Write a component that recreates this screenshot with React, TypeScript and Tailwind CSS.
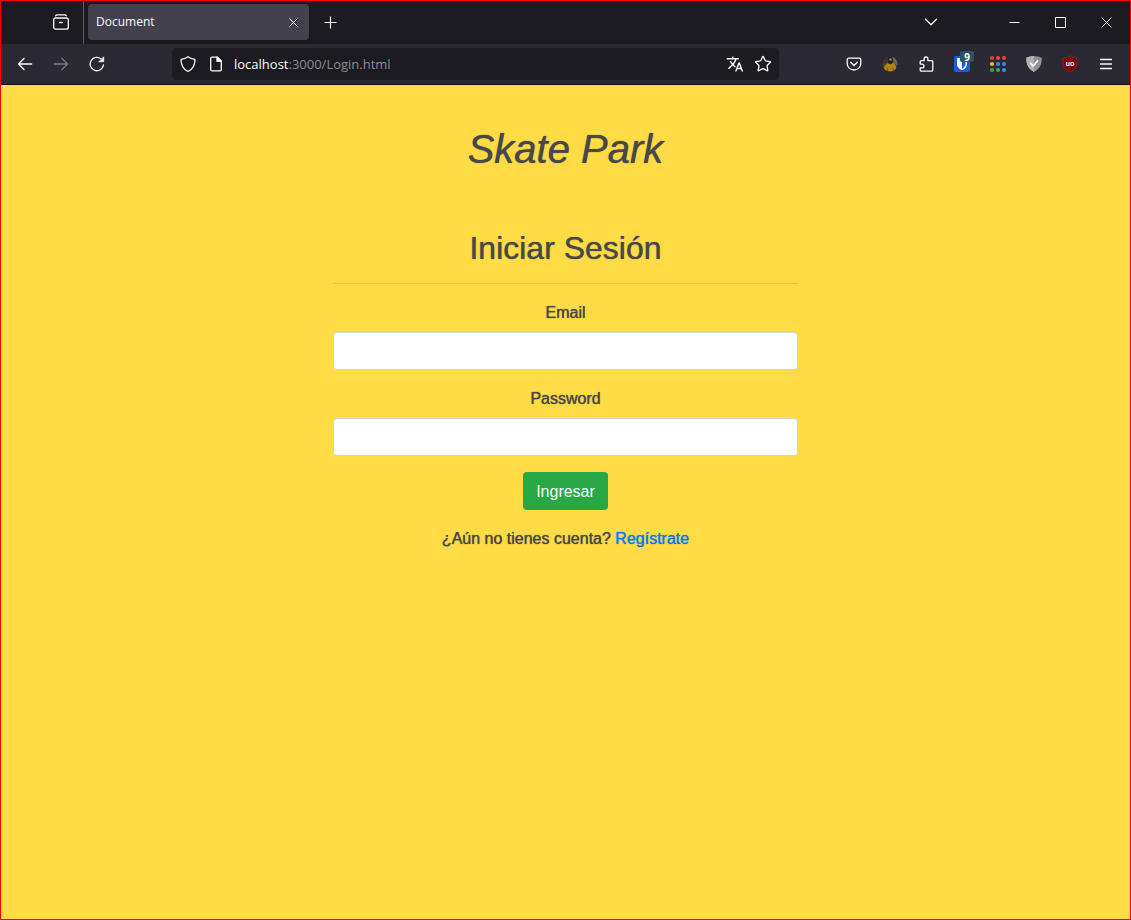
import type { ReactNode } from 'react';
import { Star } from 'lucide-react';
import { MdTranslate } from 'react-icons/md';

function Glyph({ children, label }: { children: ReactNode; label?: string }) {
  return (
    <svg
      width="16"
      height="16"
      viewBox="0 0 16 16"
      fill="none"
      stroke="currentColor"
      strokeWidth="1.3"
      strokeLinecap="round"
      strokeLinejoin="round"
      aria-label={label}
      aria-hidden={label ? undefined : true}
      className="block shrink-0 overflow-visible"
    >
      {children}
    </svg>
  );
}

function BarButton({ label, children, className = '' }: { label: string; children: ReactNode; className?: string }) {
  return (
    <button type="button" aria-label={label} className={`relative flex h-8 w-9 shrink-0 items-center justify-center ${className}`}>
      {children}
    </button>
  );
}

function WindowButton({ label, children }: { label: string; children: ReactNode }) {
  return (
    <button type="button" aria-label={label} className="flex h-full w-[46px] shrink-0 items-center justify-center">
      <svg width="11" height="11" viewBox="0 0 11 11" fill="none" stroke="currentColor" className="block" aria-hidden>
        {children}
      </svg>
    </button>
  );
}

function TabStrip() {
  return (
    <div className="flex h-[43px] bg-[#1c1b22]">
      <div className="flex h-[42px] w-[82px] shrink-0 items-center justify-end pr-0.5">
        <button type="button" aria-label="Vista de Firefox" className="flex size-10 items-center justify-center">
          <Glyph>
            <path d="M2.7 1.8Q3.2.8 4.2.8h7.6q1 0 1.5 1" />
            <rect x=".7" y="4" width="14.6" height="11.2" rx="2" />
            <path d="M6.6 8.500h2.8" />
          </Glyph>
        </button>
      </div>
      <div className="h-full w-px shrink-0 bg-[#5c5b61]" />
      <div className="mt-[3px] ml-1 flex h-9 w-[221px] shrink-0 items-center justify-between rounded bg-[#42414d] pl-2 shadow">
        <span className="font-['Open_Sans','Noto_Sans',sans-serif] text-xs">Document</span>
        <button type="button" aria-label="Cerrar pestaña" className="flex size-8 items-center justify-center">
          <svg width="9" height="9" viewBox="0 0 9 9" stroke="currentColor" strokeWidth="1" aria-hidden>
            <path d="M.5.5l8 8M8.500.5l-8 8" />
          </svg>
        </button>
      </div>
      <button type="button" aria-label="Nueva pestaña" className="ml-[3px] flex h-full w-9 items-center justify-center">
        <svg width="13" height="13" viewBox="0 0 13 13" stroke="currentColor" strokeWidth="1.2" aria-hidden>
          <path d="M6.500.5v12M.5 6.500h12" />
        </svg>
      </button>
      <div className="mr-px ml-auto flex h-[42px] items-center">
        <button type="button" aria-label="Listar pestañas" className="mr-[42px] flex size-9 items-center justify-center">
          <Glyph>
            <path d="M2.500 5.300L8 10.800l5.500-5.500" />
          </Glyph>
        </button>
        <WindowButton label="Minimizar">
          <path d="M.5 5.500h10" />
        </WindowButton>
        <WindowButton label="Maximizar">
          <path d="M.5.5h10v10H.5z" />
        </WindowButton>
        <WindowButton label="Cerrar">
          <path d="M.5.5l10 10M10.500.5l-10 10" />
        </WindowButton>
      </div>
    </div>
  );
}

function AddressBar() {
  return (
    <div className="flex h-8 min-w-0 flex-1 items-center rounded bg-[#1c1b22] pr-0.5">
      <button type="button" aria-label="Protección" className="flex h-8 w-8 shrink-0 items-center justify-center">
        <Glyph>
          <path d="M8 .7Q10.8 2.9 14.9 3.4C15.2 8.700 12.800 13.200 8 15.500 3.200 13.200.8 8.700 1.100 3.400Q5.200 2.900 8 .7z" />
        </Glyph>
      </button>
      <button type="button" aria-label="Información del sitio" className="mr-1 flex h-8 w-6 shrink-0 items-center justify-center">
        <Glyph>
          <path d="M9.500 1.100H4.200a1.500 1.500 0 0 0-1.500 1.500v10.800a1.500 1.500 0 0 0 1.500 1.500h7.600a1.500 1.500 0 0 0 1.500-1.500V5z" />
          <path d="M9 1.100L13.300 5.400H9z" fill="currentColor" />
        </Glyph>
      </button>
      <div
        role="textbox"
        aria-label="Dirección"
        tabIndex={0}
        className="min-w-0 flex-1 truncate pt-0.5 pl-0.5 font-['Open_Sans','Noto_Sans',sans-serif] text-[13px] text-[#fbfbfe]"
      >
        localhost<span className="text-[#8b8a91]">:3000/Login.html</span>
      </div>
      <button type="button" aria-label="Traducir" className="flex size-7 items-center justify-center">
        <MdTranslate size={18} />
      </button>
      <button type="button" aria-label="Añadir a marcadores" className="flex size-7 items-center justify-center">
        <Star size={18} strokeWidth={1.8} />
      </button>
    </div>
  );
}

const DOTS = [
  [2, 2, '#ea4335'],
  [8, 2, '#ea4335'],
  [14, 2, '#ea4335'],
  [2, 8, '#fbbc05'],
  [8, 8, '#4285f4'],
  [14, 8, '#4285f4'],
  [2, 14, '#34a853'],
  [8, 14, '#34a853'],
  [14, 14, '#4285f4'],
] as const;

function Extensions() {
  return (
    <div className="flex shrink-0">
      <BarButton label="Pocket">
        <Glyph>
          <path d="M2.700 2.200h10.600a1.500 1.500 0 0 1 1.500 1.500V7.500a6.800 6.500 0 0 1-13.600 0V3.700a1.500 1.500 0 0 1 1.500-1.500z" />
          <path d="M4.700 6.300L8 9.500l3.300-3.200" />
        </Glyph>
      </BarButton>
      <BarButton label="Cuenta">
        <Glyph>
          <clipPath id="avatar">
            <circle cx="8" cy="8" r="7.500" />
          </clipPath>
          <g clipPath="url(#avatar)" stroke="none">
            <path d="M0 0h16v16H0z" fill="#453f34" />
            <path d="M0 0h6L4 7 0 9z" fill="#353a2b" />
            <path d="M10 0h6v10l-4-3z" fill="#716653" />
            <path d="M1 16Q1.500 9 6 7l2.500 1L11 6.500q3.500 2 4 9.500z" fill="#b58316" />
            <path d="M5.500 10.500L4.800 16h1.400zM11 10.500l1 5.500h-1.400z" fill="#70500f" />
            <path d="M5.500 3Q6 .5 8.500.8T11 4L10.500 7 8.500 8.500 6 7z" fill="#25231f" />
            <path d="M7.500 2.500h2v2h-2z" fill="#a79683" />
          </g>
        </Glyph>
      </BarButton>
      <BarButton label="Extensiones">
        <Glyph>
          <path d="M2.200 7.200V6a1.300 1.300 0 0 1 1.300-1.300h2.600V2.900a1.900 1.900 0 0 1 3.800 0v1.800h3.600a1.300 1.300 0 0 1 1.300 1.300v7.900a1.300 1.300 0 0 1-1.300 1.300H3.500a1.300 1.300 0 0 1-1.300-1.300v-2h1.900a1.900 1.900 0 0 0 0-3.800H2.200z" />
        </Glyph>
      </BarButton>
      <BarButton label="Bitwarden, 9">
        <Glyph>
          <rect width="16" height="16" rx="2" fill="#175ddc" stroke="none" />
          <path d="M3 2h10v6c0 3.500-2.700 5.200-5 6.300C5.700 13.200 3 11.500 3 8z" fill="#fff" stroke="none" />
          <path d="M8 3.500h3.500V8c0 2.300-1.700 3.700-3.500 4.700z" fill="#175ddc" stroke="none" />
        </Glyph>
        <span className="absolute top-[3px] left-4 flex h-[11px] w-[14px] items-center justify-center rounded-xs bg-[#2c5364] font-['Noto_Sans',sans-serif] text-[10px] leading-none font-bold text-white">
          9
        </span>
      </BarButton>
      <BarButton label="Aplicaciones de Google">
        <Glyph>
          {DOTS.map(([x, y, color]) => (
            <circle key={`${x}-${y}`} cx={x} cy={y} r="2.100" fill={color} stroke="none" />
          ))}
        </Glyph>
      </BarButton>
      <BarButton label="AdGuard">
        <Glyph>
          <path d="M8 0q4 .1 7.700 1.800C16 8.500 13.500 13 8 16 2.500 13 0 8.500.3 1.800Q4 .1 8 0z" fill="#929292" stroke="none" />
          <path d="M8 0Q4 .1.3 1.800C0 8.500 2.500 13 8 16z" fill="#b1b1b1" stroke="none" />
          <path d="M4.700 7.500l2.500 2.600L11.500 5" stroke="#fff" strokeWidth="1.700" />
        </Glyph>
      </BarButton>
      <BarButton label="uBlock Origin">
        <Glyph>
          <path d="M8 .2q3 1.800 7 1.800v5c0 4.500-2 6.500-7 8.800-5-2.300-7-4.300-7-8.800V2q4 0 7-1.800z" fill="#800000" stroke="#a04040" strokeWidth=".5" />
          <text x="8" y="10" textAnchor="middle" fill="#fff" stroke="none" fontFamily="Liberation Sans, sans-serif" fontWeight="700" fontSize="7">
            uo
          </text>
        </Glyph>
      </BarButton>
      <BarButton label="Menú">
        <Glyph>
          <path d="M2.500 3.500h11M2.500 8h11M2.500 12.500h11" />
        </Glyph>
      </BarButton>
    </div>
  );
}

function NavBar() {
  return (
    <div className="flex h-[41px] items-center border-b border-[#0c0c0d] bg-[#2b2a33] px-1.5">
      <div className="mr-[57px] flex shrink-0">
        <BarButton label="Atrás">
          <Glyph>
            <path d="M1.500 8h13.200M7 2.500L1.500 8 7 13.500" />
          </Glyph>
        </BarButton>
        <BarButton label="Adelante" className="text-[#7c7b82]">
          <Glyph>
            <path d="M14.500 8H1.300M9 2.500L14.500 8 9 13.500" />
          </Glyph>
        </BarButton>
        <BarButton label="Recargar">
          <Glyph>
            <path d="M14.500 9A6.700 6.700 0 1 1 12.200 2.900" />
            <path d="M14.700 1.200v4.500h-4.500z" fill="currentColor" strokeWidth=".8" />
          </Glyph>
        </BarButton>
      </div>
      <AddressBar />
      <div className="w-[57px] shrink-0" />
      <Extensions />
    </div>
  );
}

function Field({ id, label, type }: { id: string; label: string; type: string }) {
  return (
    <div className="mb-4">
      <label htmlFor={id} className="mb-1.5 block leading-[26px] text-shadow-[0_0_1px_#484848]">
        {label}
      </label>
      <input id={id} name={id} type={type} className="block h-[38px] w-full rounded border border-[#ced4da] bg-white px-3 text-[#495057]" />
    </div>
  );
}

export default function App() {
  return (
    <div className="flex min-h-screen flex-col border border-[#ff0000] bg-[#ffdb45]">
      <header className="text-[#fbfbfe]">
        <TabStrip />
        <NavBar />
      </header>
      <main className="mx-auto w-full max-w-[465px] flex-1 pt-10 pb-10 text-center font-['Liberation_Sans',Arial,sans-serif] text-base text-[#484848]">
        <h1 className="mb-14 text-[40px] leading-[48px] font-medium italic text-shadow-[0_0_1px_#484848]">Skate Park</h1>
        <h2 className="text-[32px] leading-[38px] font-medium text-shadow-[0_0_1px_#484848]">Iniciar Sesión</h2>
        <hr className="my-4 border-t border-[#e6c53e]" />
        <form onSubmit={(event) => event.preventDefault()}>
          <Field id="email" label="Email" type="email" />
          <Field id="password" label="Password" type="password" />
          <button type="submit" className="mb-4 h-[38px] rounded bg-[#28a745] px-[13px] pt-0.5 text-white">
            Ingresar
          </button>
          <p className="leading-[26px] text-shadow-[0_0_1px_#484848]">
            ¿Aún no tienes cuenta?{' '}
            <a href="#registro" className="text-[#007bff] text-shadow-[0_0_1px_#007bff]">
              Regístrate
            </a>
          </p>
        </form>
      </main>
    </div>
  );
}
